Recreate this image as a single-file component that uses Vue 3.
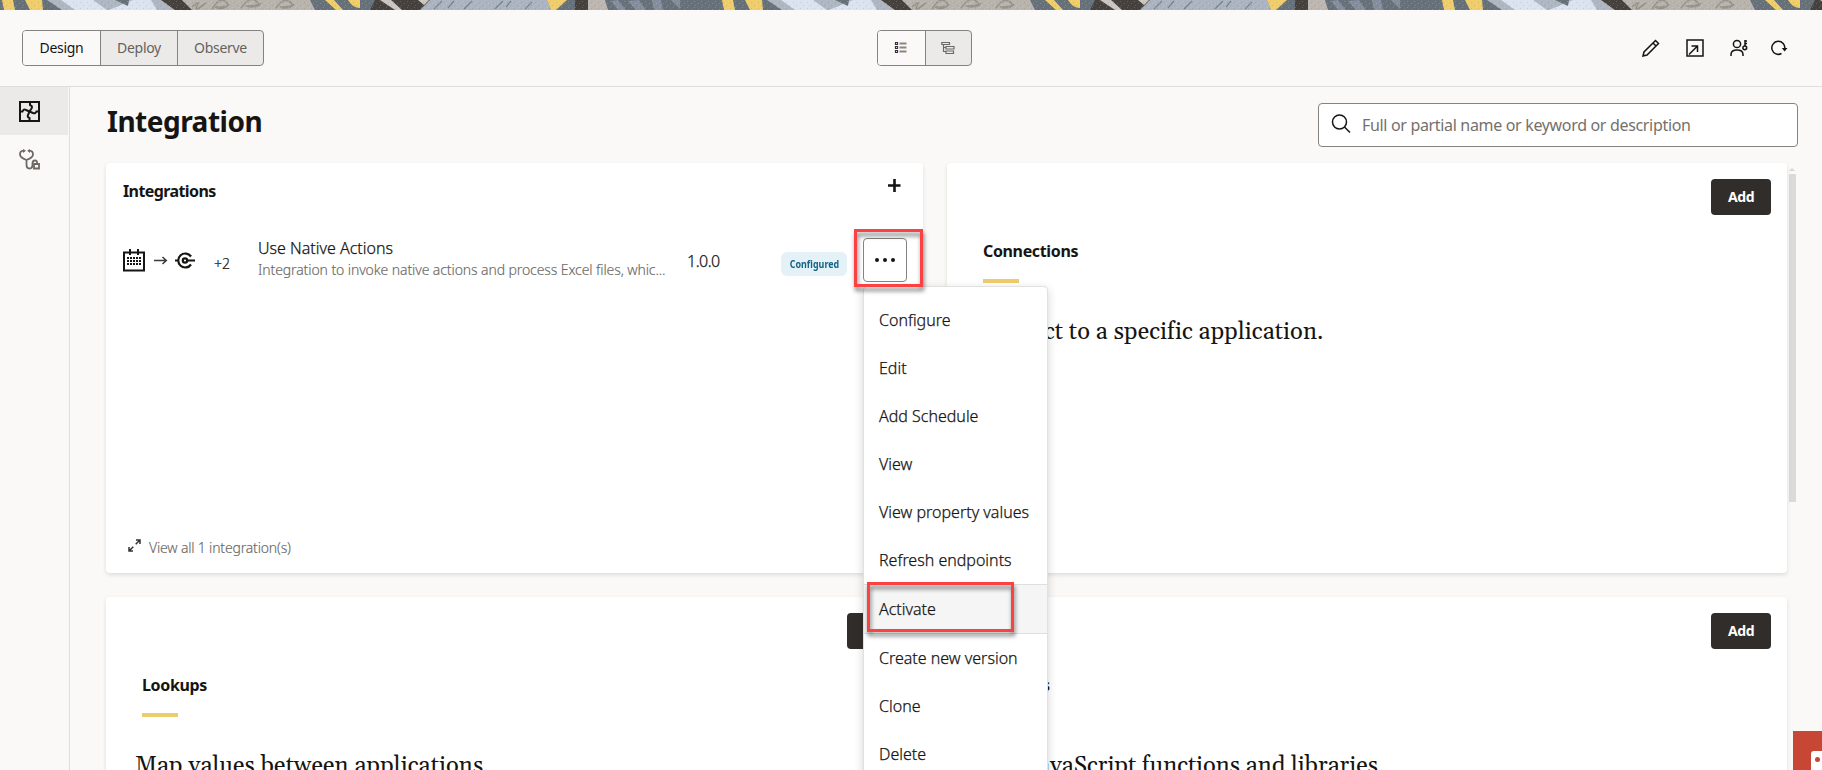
<script setup>
const menuItems = ['Configure', 'Edit', 'Add Schedule', 'View', 'View property values', 'Refresh endpoints', 'Activate', 'Create new version', 'Clone', 'Delete']
const tabs = ['Design', 'Deploy', 'Observe']
</script>

<template>
  <div class="page">
    <svg class="banner" width="1822" height="10" viewBox="0 0 1822 10">
      <defs>
        <pattern id="speck" width="7" height="6" patternUnits="userSpaceOnUse">
          <path d="M1 1h1v1h-1zM5 3h1v1h-1zM2 5h1v1h-1z" fill="#fff" opacity=".16" />
          <path d="M3 2h1v1h-1zM6 5h1v1h-1z" fill="#333" opacity=".12" />
        </pattern>
        <pattern id="strip" width="720" height="10" patternUnits="userSpaceOnUse">
          <rect width="720" height="10" fill="#66717a" />
          <path d="M2 0h11l2 10H4zM25 0h17l1 10H30z" fill="#efcc6c" />
          <path d="M47 0H162L175 10H62z" fill="#adb6c1" />
          <path d="M61 0H93L107 10H75zM133 0h18L157 10H109z" fill="#dbe3f1" />
          <path d="M115 0h14l-1 6z" fill="#66717a" />
          <path d="M161 0h21l10 10H175z" fill="#46413d" />
          <path d="M182 0H310l5 10H192z" fill="#b9b3ad" />
          <path d="M192 7q9-8 5-1t9-3M212 9q8-13 14-7t-11 5q9 4 14-3M241 8q8-12 15-7t-10 5q10 3 15-3M276 8q7-11 14-6t-10 5q9 3 14-3" fill="none" stroke="#99938c" stroke-width="1.6" />
          <path d="M325 0h9l9 10h-7zM348 0h12v8q-7 0-12-8z" fill="#efcc6c" />
          <path d="M375 0H431l-11 10H370z" fill="#46413d" />
          <path d="M380 0h11l11 10h-7zM418 0h11l-5 5z" fill="#ccc6c0" />
          <path d="M430 0H547l4 10H420z" fill="#abb4c0" />
          <path d="M434 9l8-8M448 8l6-7M464 9l8-8M495 9l8-8M506 7l5-6M525 9l7-7" stroke="#77828f" stroke-width="1.3" />
          <path d="M547 0h20l-11 10h-5z" fill="#efcc6c" />
          <path d="M575 0h13v10h-13z" fill="#46413d" />
          <path d="M588 0h17l3 10H588z" fill="#bdb6b0" />
          <path d="M611 1l7 9h8L618 0M628 1l8 9h10L639 0M652 0l2 10h9L661 0M671 0l9 9V0" fill="#858e9d" />
          <rect width="720" height="10" fill="url(#speck)" />
        </pattern>
      </defs>
      <rect width="1822" height="10" fill="url(#strip)" />
    </svg>

    <header class="topbar">
      <div class="segmented">
        <button v-for="(t, i) in tabs" :key="t" class="seg" :class="['seg' + i, { on: i === 0 }]">{{ t }}</button>
      </div>
      <div class="segmented views">
        <button class="seg on">
          <svg width="14" height="14" viewBox="0 0 14 14" fill="none">
            <path d="M1.5 1.5h2v2h-2zM1.5 5.5h2v2h-2zM1.5 9.5h2v2h-2z" stroke="#35323d" stroke-width="1.2" />
            <path d="M5.500 2.500h7M5.500 6.500h7M5.500 10.500h7" stroke="#8b8581" stroke-width="2" />
          </svg>
        </button>
        <button class="seg">
          <svg width="14" height="14" viewBox="0 0 14 14" fill="none" stroke="#6c6a66" stroke-width="1.2">
            <path d="M.8 1.5h7.7v2H.8zM2.5 3.5v7H5M2.5 6.5H5M5 5.5h8v2.500H5zM5 10h7.500v2.500H5z" />
          </svg>
        </button>
      </div>
      <div class="tools">
        <svg width="18" height="18" viewBox="0 0 18 18">
          <path d="M1 17l1-4L13.5 1.5l3 3L5 16zM11 4l3 3" />
        </svg>
        <svg width="18" height="18" viewBox="0 0 18 18">
          <path d="M1 1h16v16H1zM3 15.500l8-8M5.500 7H11.500V13" />
        </svg>
        <svg width="18" height="18" viewBox="0 0 18 18">
          <circle cx="7" cy="5" r="3.600" />
          <path d="M1 17v-1.500C1 12.500 3.500 11 7 11s6 1.500 6 4.500V17" />
          <circle cx="14.800" cy="8.800" r="1.900" />
          <path d="M15 7V1M15 2h2M15 4.500h2" />
        </svg>
        <svg width="18" height="18" viewBox="0 0 18 18">
          <path d="M11.500 14.500A6.500 6.500 0 1 1 14.700 10" />
          <path d="M11.800 9h5.700l-2.900 3.400z" fill="#161513" stroke="none" />
        </svg>
      </div>
    </header>

    <div class="body">
      <nav class="side">
        <div class="side-item on">
          <svg width="21" height="21" viewBox="0 0 21 21" fill="none" stroke="#161513" stroke-width="2">
            <path d="M1 1h19v19H1z" />
            <path d="M11 1v3q3 1 1.500 3.500L10.500 10.500 9 14q-1 2 1.500 3V20M1 10.500h2.500q1-3 3.500-1.500l3.500 1.500 3.500 1.500q2.500 1 3.500-1.500H20" />
          </svg>
        </div>
        <div class="side-item">
          <svg width="21" height="21" viewBox="0 0 21 21" fill="none" stroke="#6c6864" stroke-width="1.800">
            <path d="M4.500 1.700Q1 2 1 5.500 1 8.500 7.500 11 14 8.500 14 5.500 14 2 10.500 1.700M7.500 11v4.500q0 4 3 4t3-4v-1q0-3 2.500-3t2 3" />
            <path d="M4 0l3 1.700L4 4zM11 0L8.200 1.700 11 4z" fill="#6c6864" stroke="none" />
            <path d="M15 15h5v4.500h-5z" />
          </svg>
        </div>
      </nav>

      <main class="main">
        <div class="head">
          <h1>Integration</h1>
          <div class="search">
            <svg width="20" height="20" viewBox="0 0 20 20" fill="none" stroke="#161513" stroke-width="1.500">
              <circle cx="8.500" cy="8" r="7" /><path d="M13.500 13l5.500 5.500" />
            </svg>
            <span>Full or partial name or keyword or description</span>
          </div>
        </div>

        <div class="scroller">
          <div class="cards">
            <section class="card list">
              <div class="list-head">
                <h2 class="ttl-int">Integrations</h2>
                <svg class="plus" width="13" height="13" viewBox="0 0 13 13"><path d="M6.500 0v13M0 6.500h12.500" stroke="#161513" stroke-width="2.600" /></svg>
              </div>
              <div class="row">
                <svg class="cal" width="22" height="23" viewBox="0 0 22 23" fill="none" stroke="#161513">
                  <path d="M1 3.500h20V21.500H1z" stroke-width="2" />
                  <path d="M7 0v6M15 0v6" stroke-width="2" />
                  <path d="M4 9h14M4 12h14M4 15h14" stroke-width="2" stroke-dasharray="2 1" />
                </svg>
                <svg class="arr" width="14" height="9" viewBox="0 0 14 9" fill="none" stroke="#3d3b38" stroke-width="1.500"><path d="M0 4.500h12M8.500 1L12.300 4.500 8.500 8" /></svg>
                <svg class="conn" width="20" height="17" viewBox="0 0 20 17" fill="none" stroke="#161513" stroke-width="2.200">
                  <path d="M16 4.500A7 7 0 1 0 16 12.500M0 8.500h4M12 8.500h8" /><circle cx="10" cy="8.500" r="2.200" />
                </svg>
                <span class="more-count">+2</span>
                <div class="info">
                  <div class="name">Use Native Actions</div>
                  <div class="desc">Integration to invoke native actions and process Excel files, whic...</div>
                </div>
                <span class="ver">1.0.0</span>
                <span class="badge"><span>Configured</span></span>
                <button class="dots"><i /><i /><i /></button>
              </div>
              <div class="view-all">
                <svg width="13" height="13" viewBox="0 0 13 13" fill="none" stroke="#35332f" stroke-width="1.500"><path d="M8 .9h4V5M12 1L7.700 5.300M5 12H1V8M1 12l4.300-4.300" /></svg>
                <span>View all 1 integration(s)</span>
              </div>
            </section>

            <section class="card promo">
              <button class="add">Add</button>
              <h2>Connections</h2><hr>
              <p>Connect to a specific application.</p>
            </section>
            <section class="card promo">
              <button class="add">Add</button>
              <h2>Lookups</h2><hr>
              <p>Map values between applications.</p>
            </section>
            <section class="card promo">
              <button class="add">Add</button>
              <h2>Libraries</h2><hr>
              <p class="p-lib">Add JavaScript functions and libraries.</p>
            </section>
          </div>
          <div class="bar"><span class="bar-up" /><span class="bar-thumb" /></div>
        </div>
      </main>
    </div>

    <ul class="menu">
      <li v-for="m in menuItems" :key="m" :class="{ active: m === 'Activate' }">{{ m }}</li>
    </ul>
    <div class="mark mark-dots" />
    <div class="mark mark-activate" />
    <div class="widget"><span class="widget-box"><span class="widget-dot" /></span></div>
  </div>
</template>

<style>
html, body { margin: 0; overflow: hidden; }
</style>

<style scoped>
* { box-sizing: border-box; }
.page { position: relative; width: 1822px; height: 770px; overflow: hidden; background: #faf9f7; color: #161513; font: 400 14px/20px "Noto Sans", "Open Sans", sans-serif; display: flex; flex-direction: column; }
button { font: inherit; color: inherit; padding: 0; margin: 0; }
svg { display: block; flex: none; }
h1, h2, p, ul { margin: 0; padding: 0; }
.banner { flex: none; }
.topbar { height: 77px; flex: none; border-bottom: 1px solid #e0dedb; display: flex; align-items: flex-start; padding: 20px 34px 0 22px; }
.segmented { display: flex; height: 36px; border: 1px solid #858380; border-radius: 4px; overflow: hidden; background: #ebeae8; }
.seg { border: 0; border-left: 1px solid #858380; background: transparent; color: #65625e; display: flex; align-items: center; justify-content: center; letter-spacing: -.3px; }
.seg:first-child { border-left: 0; }
.seg.on { background: #faf9f7; color: #161513; }
.seg0 { width: 77px; }
.seg1 { width: 77px; }
.seg2 { width: 86px; }
.views { margin-left: 613px; }
.views .seg { width: 46.500px; }
.views svg { margin-top: -1px; }
.tools { margin-left: auto; display: flex; padding-top: 9px; gap: 26px; }
.tools svg { fill: none; stroke: #161513; stroke-width: 1.500; }
.tools svg:last-child { margin-left: -4px; }
.body { flex: 1; display: flex; min-height: 0; }
.side { width: 70px; border-right: 1px solid #e0dedb; flex: none; }
.side-item { width: 68px; height: 48px; padding: 14px 0 0 19px; }
.side-item.on { background: #ebeae8; }
.main { flex: 1; padding: 16px 24px 0 36px; min-width: 0; }
.head { display: flex; justify-content: space-between; height: 60px; }
h1 { font-size: 28px; line-height: 36px; letter-spacing: -.5px; padding-left: 1px; }
.search { width: 480px; height: 44px; border: 1px solid #858380; border-radius: 4px; background: #fff; display: flex; align-items: center; padding-left: 12px; font-size: 16px; color: #74716d; }
.search svg { margin-top: -2px; }
.search span { margin-left: 11px; letter-spacing: -.33px; }
.scroller { display: flex; gap: 2px; }
.cards { display: grid; grid-template-columns: 817px 840px; grid-auto-rows: 410px; gap: 24px; }
.card { background: #fff; border-radius: 4px; box-shadow: 0 2px 4px rgba(22, 21, 19, .12); }
h2 { font-size: 16px; line-height: 24px; font-weight: 700; letter-spacing: -.35px; }
.ttl-int { letter-spacing: -.6px; }
.list { padding: 16px 16px 0 17px; display: flex; flex-direction: column; }
.list-head { display: flex; justify-content: space-between; }
.list-head .plus { margin: 0 6px 0 0; }
.row { display: flex; align-items: flex-start; height: 60px; margin-top: 30px; }
.cal { margin-top: 16px; }
.arr { margin: 23px 0 0 9px; }
.conn { margin: 19px 0 0 7px; }
.more-count { margin: 21px 0 0 19px; width: 26px; font-size: 14px; letter-spacing: -.1px; font-weight: 300; -webkit-text-stroke: .2px; }
.info { margin: 3px 0 0 18px; width: 429px; }
.name { font-size: 16px; line-height: 24px; font-weight: 300; -webkit-text-stroke: .25px; }
.desc { font-size: 14px; line-height: 20px; font-weight: 300; -webkit-text-stroke: .15px; letter-spacing: -.1px; color: #6b6864; white-space: nowrap; }
.ver { width: 94px; margin-top: 16px; font-size: 16px; line-height: 24px; letter-spacing: -.5px; font-weight: 300; -webkit-text-stroke: .25px; }
.badge { width: 66px; height: 24px; margin-top: 19px; border-radius: 6px; background: #e4f1f7; color: #136486; font-size: 11px; line-height: 24px; font-weight: 700; display: flex; justify-content: center; }
.badge span { transform: scaleX(.81); }
.dots { width: 44px; height: 44px; margin: 5px 0 0 16px; flex: none; border: 1px solid #858380; border-radius: 4px; background: #fff; display: flex; align-items: center; justify-content: center; gap: 4px; }
.dots i { width: 4px; height: 4px; border-radius: 50%; background: #161513; }
.view-all { display: flex; margin: 245px 0 0 5px; color: #6b6864; font-weight: 300; letter-spacing: -.18px; -webkit-text-stroke: .15px; }
.view-all svg { margin: 1px 8px 0 0; }
.promo { position: relative; padding: 76px 30px 0; }
.promo h2 { padding-left: 6px; }
.promo hr { width: 36px; height: 4px; border: 0; margin: 16px 0 33px 6px; background: #eecb6b; }
.promo p { font: 23.700px/32px Gelasio, Georgia, "Liberation Serif", serif; white-space: nowrap; letter-spacing: .1px; margin-left: -1px; }
.promo .p-lib { letter-spacing: 0; margin-left: 0; }
.add { position: absolute; top: 16px; right: 16px; width: 60px; height: 36px; border: 0; border-radius: 4px; background: #312d2a; color: #fff; font-weight: 700; letter-spacing: -.4px; }
.bar { width: 7px; padding-top: 5px; }
.bar-up { display: block; border: 3px solid transparent; border-top: 0; border-bottom: 3px solid #d9d8d6; margin-bottom: 3px; width: 6px; }
.bar-thumb { display: block; height: 328px; background: #dbdad8; }
.menu { position: absolute; left: 863px; top: 286px; width: 185px; height: 500px; padding-top: 9px; background: #fff; border: 1px solid #e3e1df; border-radius: 4px; box-shadow: 0 3px 10px rgba(22, 21, 19, .18); list-style: none; font-size: 16px; }
.menu li { height: 48px; line-height: 48px; padding-left: 15px; font-weight: 300; -webkit-text-stroke: .25px; }
.menu .active { height: 50px; border: 1px solid #e0dfdd; border-width: 1px 0; background: #f5f5f5; }
.mark { position: absolute; border: 3px solid #fb4242; filter: drop-shadow(1px 4px 2px rgba(0, 0, 0, .5)); }
.mark-dots { left: 854px; top: 229px; width: 69px; height: 58px; }
.mark-activate { left: 867px; top: 582px; width: 147px; height: 50px; }
.widget { position: absolute; left: 1793px; top: 731px; width: 29px; height: 39px; background: #c74634; padding: 20px 0 0 18px; }
.widget-box { display: block; width: 24px; height: 24px; border-radius: 3px; background: #fff; padding: 6px 0 0 4px; }
.widget-dot { display: block; width: 5px; height: 5px; border-radius: 50%; background: #c74634; }
</style>
